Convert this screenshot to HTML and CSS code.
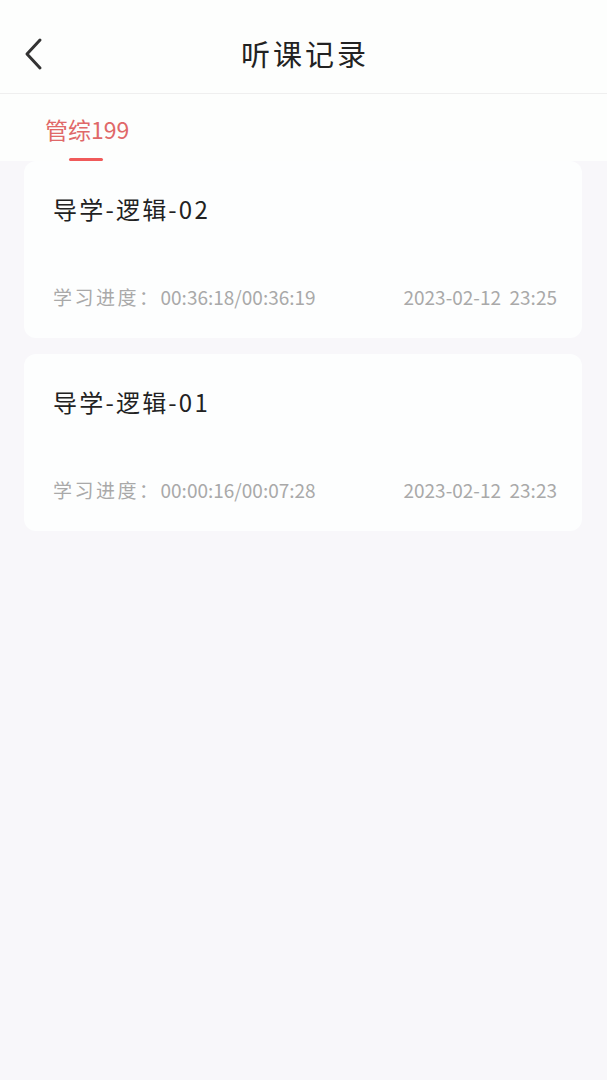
FILE: index.html
```html
<!DOCTYPE html>
<html lang="zh-CN">
<head>
    <meta charset="UTF-8">
    <meta name="viewport" content="width=device-width, initial-scale=1.0">
    <title>听课记录</title>
    <link rel="stylesheet" href="styles.css">
</head>

<body>
<div class="page">
    <div class="nav-bar">
        <a class="back-btn" href="#">
            <svg width="24" height="36" viewBox="0 0 24 36">
                <path d="M16 3 L3 17 L16 31" fill="none" stroke="#333" stroke-width="3" stroke-linecap="round" stroke-linejoin="round"/>
            </svg>
        </a>
        <h1 class="nav-title">听课记录</h1>
    </div>

    <div class="tabs">
        <div class="tab active">管综199</div>
    </div>

    <div class="record-list">
        <div class="record-card">
            <div class="record-title">导学-逻辑-02</div>
            <div class="record-meta">
                <span><span class="meta-label">学习进度：</span>00:36:18/00:36:19</span>
                <span>2023-02-12&nbsp;&nbsp;23:25</span>
            </div>
        </div>
        <div class="record-card">
            <div class="record-title">导学-逻辑-01</div>
            <div class="record-meta">
                <span><span class="meta-label">学习进度：</span>00:00:16/00:07:28</span>
                <span>2023-02-12&nbsp;&nbsp;23:23</span>
            </div>
        </div>
    </div>
</div>
</body>
</html>
```

FILE: styles.css
```css
* {
    margin: 0;
    padding: 0;
    box-sizing: border-box;
}

body {
    font-family: "Noto Sans CJK SC", "Noto Sans", sans-serif;
    background-color: #f8f7fa;
    color: #222;
}

.nav-bar {
    height: 94px;
    background-color: #fdfefd;
    border-bottom: 1px solid #efefef;
    display: flex;
    align-items: center;
    justify-content: center;
    position: relative;
}

.back-btn {
    position: absolute;
    left: 24px;
    top: 37px;
    display: flex;
}

.nav-title {
    font-size: 29px;
    font-weight: normal;
    letter-spacing: 3px;
    margin-top: 12px;
    margin-left: 3px;
    color: #222;
}

.tabs {
    height: 67px;
    background-color: #fdfefd;
    display: flex;
    padding-left: 45px;
}

.tab {
    position: relative;
    font-size: 23px;
    color: #e06868;
    padding-top: 18px;
}

.tab.active::after {
    content: "";
    position: absolute;
    left: 24px;
    bottom: 0;
    width: 34px;
    height: 3px;
    border-radius: 2px;
    background-color: #f05a5a;
}

.record-list {
    display: flex;
    flex-direction: column;
    gap: 16px;
    padding: 0 25px 0 24px;
}

.record-card {
    height: 177px;
    background-color: #fdfefe;
    border-radius: 12px;
    padding: 28px 25px 0 29px;
}

.record-title {
    font-size: 24px;
    line-height: 40px;
    letter-spacing: 2.2px;
    color: #222;
}

.record-meta {
    display: flex;
    justify-content: space-between;
    margin-top: 53px;
    font-size: 19px;
    line-height: 30px;
    color: #a9a9a9;
}

.meta-label {
    letter-spacing: 2.5px;
}
```
